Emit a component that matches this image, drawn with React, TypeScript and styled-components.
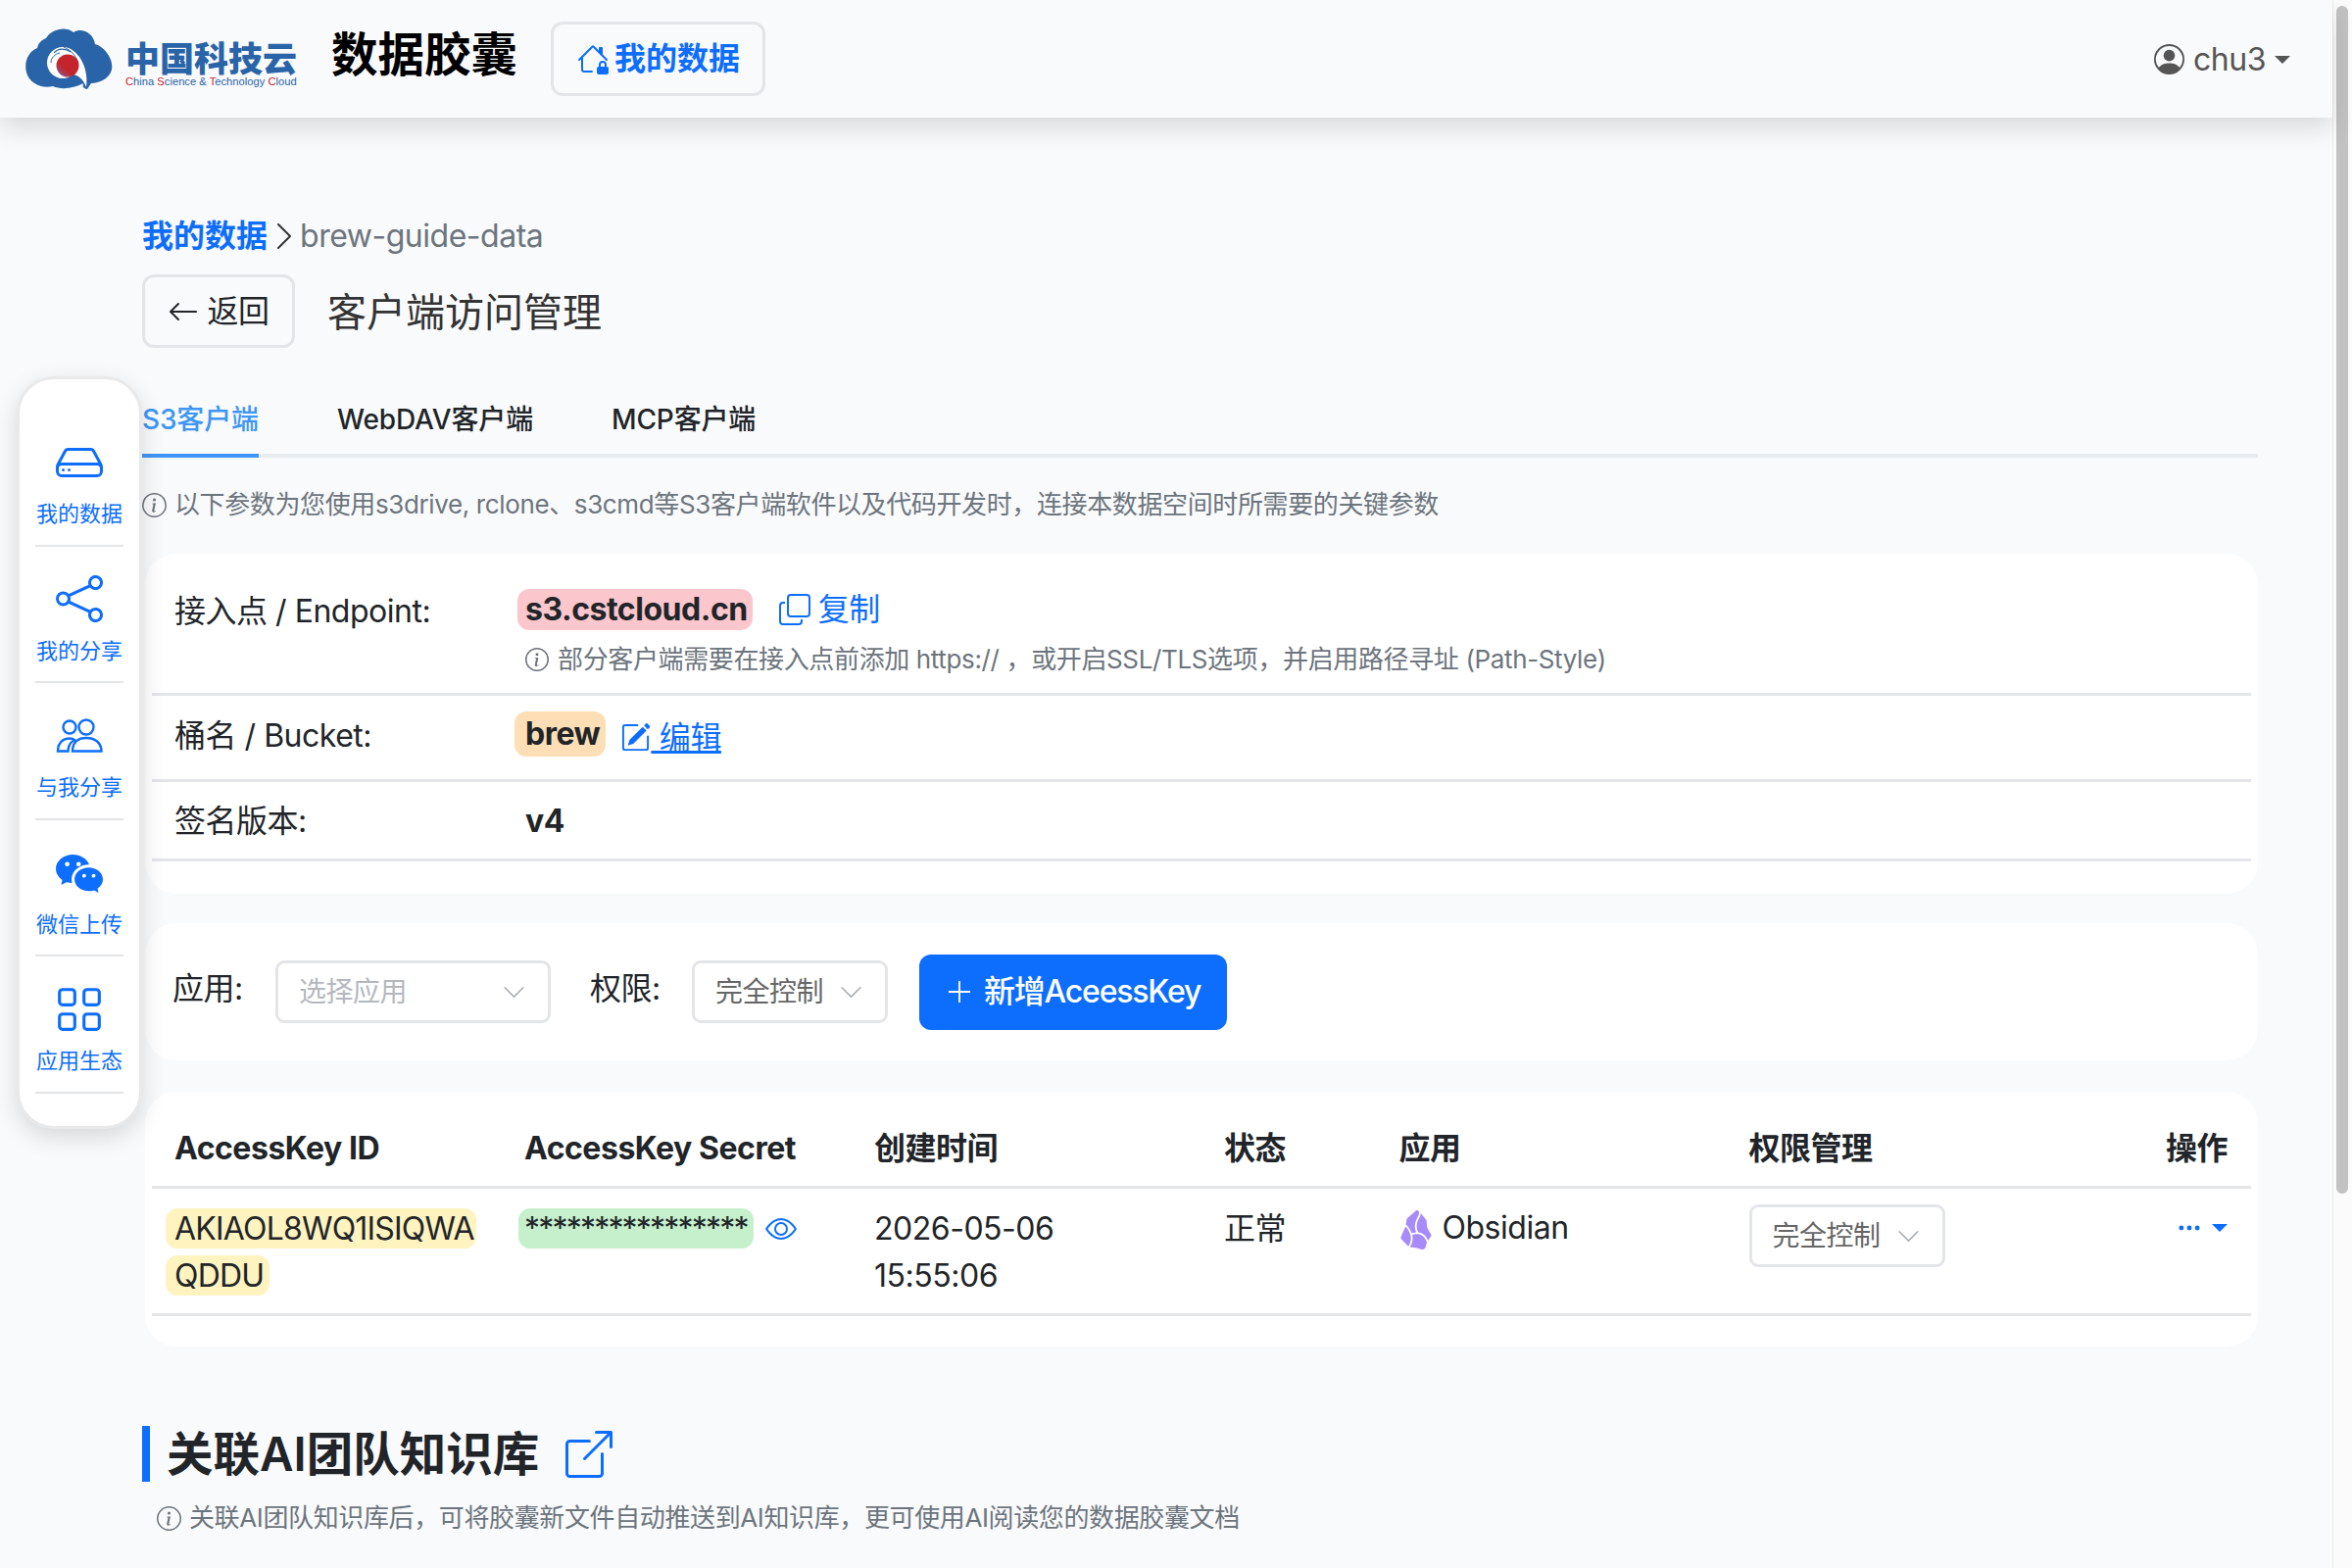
import React from "react"
import styled, { createGlobalStyle } from "styled-components"
import {
  BsArrowLeft,
  BsBoxArrowUpRight,
  BsChevronDown,
  BsChevronRight,
  BsCopy,
  BsEye,
  BsGrid,
  BsHdd,
  BsHouseLock,
  BsInfoCircle,
  BsPencilSquare,
  BsPersonCircle,
  BsPlusLg,
  BsShare,
  BsThreeDots,
  BsWechat,
} from "react-icons/bs"
import { SiObsidian } from "react-icons/si"

const BLUE = "#0d6efd"
const LINE = "#e3e5e8"
const GRAY = "#6c757d"
const INK = "#212529"

const GlobalStyle = createGlobalStyle`
  html, body {
    margin: 0;
    height: 100%;
    overflow: hidden;
    background: #f9fafc;
  }
  body {
    font-family: Inter, "Noto Sans CJK SC", sans-serif;
    font-size: 32px;
    line-height: 48px;
    letter-spacing: -0.015em;
    color: ${INK};
  }
`

// PAGE
const Page = styled.div`
  position: relative;
  display: flex;
  width: 2400px;
  height: 1600px;
  overflow: hidden;
`
const Column = styled.div`
  flex: 0 0 2380px;
  display: flex;
  flex-direction: column;
`
const ScrollTrack = styled.div`
  flex: 1;
  box-sizing: border-box;
  padding: 6px 4px 0 3px;
  background: #fbfbfb;
  border-left: 1px solid #ececec;
`
const ScrollThumb = styled.div`
  height: 1212px;
  border-radius: 6px;
  background: #c2c2c2;
`

// HEADER
const Header = styled.header`
  position: relative;
  z-index: 2;
  flex: 0 0 120px;
  display: flex;
  align-items: center;
  box-sizing: border-box;
  padding: 0 43px 0 25px;
  background: #f9fafc;
  box-shadow: 0 12px 24px rgba(0, 0, 0, 0.12);
`
const Logo = styled.div`
  display: flex;
  align-items: center;
  gap: 13px;
  width: 278px;
`
const LogoWords = styled.div`
  display: flex;
  flex-direction: column;
  width: 175px;
  padding-top: 7px;
`
const LogoName = styled.div`
  font-family: "Noto Sans CJK SC", sans-serif;
  font-size: 35px;
  line-height: 38px;
  font-weight: 900;
  letter-spacing: 0;
  color: #2a64a8;
  white-space: nowrap;
`
const LogoTag = styled.div`
  font-family: "Liberation Sans", sans-serif;
  font-size: 11.2px;
  line-height: 12px;
  letter-spacing: 0;
  color: #2a64a8;
  white-space: nowrap;
  b {
    font-weight: 400;
    color: #c8242b;
  }
`
const AppTitle = styled.div`
  margin: 0 34px 8px 35px;
  font-size: 47.5px;
  line-height: 60px;
  font-weight: 700;
  letter-spacing: 0;
  color: #000;
  white-space: nowrap;
`
const HomeButton = styled.div`
  display: flex;
  align-items: center;
  gap: 6px;
  box-sizing: border-box;
  width: 219px;
  height: 76px;
  padding-left: 24px;
  border: 3px solid ${LINE};
  border-radius: 12px;
  font-weight: 700;
  letter-spacing: 0;
  color: ${BLUE};
  white-space: nowrap;
`
const UserMenu = styled.div`
  margin-left: auto;
  display: flex;
  align-items: center;
  gap: 9px;
  padding-top: 1px;
  color: #555;
`
const Caret = styled.span<{ $color: string; $size: number }>`
  display: inline-block;
  border-left: ${(p) => p.$size}px solid transparent;
  border-right: ${(p) => p.$size}px solid transparent;
  border-top: ${(p) => p.$size}px solid ${(p) => p.$color};
`

// MAIN
const Main = styled.main`
  position: relative;
  z-index: 1;
  flex: 1;
  padding: 97px 76px 0 145px;
`
const Breadcrumb = styled.div`
  display: flex;
  align-items: center;
  height: 48px;
  color: ${GRAY};
  white-space: nowrap;
`
const CrumbLink = styled.span`
  font-weight: 700;
  letter-spacing: 0;
  color: ${BLUE};
  margin-right: 1px;
`
const TitleRow = styled.div`
  display: flex;
  align-items: center;
  gap: 33px;
  margin-top: 15px;
`
const BackButton = styled.div`
  display: flex;
  align-items: center;
  justify-content: center;
  gap: 8px;
  box-sizing: border-box;
  width: 156px;
  height: 75px;
  border: 3px solid ${LINE};
  border-radius: 12px;
  color: ${INK};
`
const PageTitle = styled.div`
  padding-top: 2px;
  font-size: 40px;
  line-height: 60px;
  letter-spacing: 0;
  color: #333;
`
const Tabs = styled.div`
  display: flex;
  gap: 80px;
  height: 73px;
  margin-top: 35px;
  border-bottom: 4px solid #e9ecef;
`
const Tab = styled.div<{ $active?: boolean }>`
  height: 73px;
  box-sizing: content-box;
  font-size: 28px;
  line-height: 76px;
  font-weight: 500;
  letter-spacing: -0.005em;
  white-space: nowrap;
  color: ${(p) => (p.$active ? "#3d96f5" : INK)};
  border-bottom: 4px solid ${(p) => (p.$active ? "#3d96f5" : "transparent")};
`
const InfoLine = styled.div<{ $indent?: number; $top: number }>`
  display: flex;
  align-items: center;
  gap: 8px;
  height: 40px;
  margin-top: ${(p) => p.$top}px;
  margin-left: ${(p) => p.$indent ?? 0}px;
  font-size: 26px;
  line-height: 40px;
  letter-spacing: -0.0145em;
  color: ${GRAY};
  white-space: nowrap;
`
const Card = styled.section<{ $top: number; $bottom?: number }>`
  box-sizing: border-box;
  margin: ${(p) => p.$top}px 0 0 3px;
  padding: 0 7px ${(p) => p.$bottom ?? 0}px;
  background: #fff;
  border-radius: 32px;
`

// ENDPOINT ROWS
const InfoRow = styled.div<{ $top: number; $bottom: number }>`
  display: grid;
  grid-template-columns: 358px 1fr;
  padding: ${(p) => p.$top}px 0 ${(p) => p.$bottom}px 23px;
  border-bottom: 3px solid ${LINE};
`
const RowLabel = styled.span`
  padding-top: 3px;
  line-height: 45px;
`
const Value = styled.div`
  display: flex;
  align-items: center;
  gap: 12px;
  height: 48px;
  white-space: nowrap;
`
const PlainValue = styled.b`
  padding-top: 3px;
`
const Pill = styled.span<{ $bg: string; $pad?: number; $padRight?: number; $height?: number; $bold?: boolean }>`
  display: inline-block;
  margin-left: -${(p) => p.$pad ?? 8}px;
  padding: 0 ${(p) => p.$padRight ?? p.$pad ?? 8}px 0 ${(p) => p.$pad ?? 8}px;
  line-height: ${(p) => p.$height ?? 42}px;
  font-weight: ${(p) => (p.$bold ? 700 : 400)};
  background: ${(p) => p.$bg};
  border-radius: 12px;
  white-space: nowrap;
`
const KeyPill = styled(Pill)`
  letter-spacing: -0.8px;
`
const SecretPill = styled(Pill)`
  letter-spacing: -1.8px;
`
const BlueLink = styled.span`
  display: inline-flex;
  align-items: center;
  gap: 8px;
  margin-left: 15px;
  color: ${BLUE};
`
const EditLink = styled.span`
  display: inline-block;
  margin: 8px 0 0 3px;
  color: ${BLUE};
  text-decoration: underline;
  white-space: pre;
  svg {
    vertical-align: -4px;
  }
`
const Hint = styled.div`
  display: flex;
  align-items: center;
  gap: 9px;
  height: 48px;
  margin-top: 3px;
  font-size: 26px;
  letter-spacing: -0.014em;
  color: ${GRAY};
  white-space: nowrap;
`

// FILTER BAR
const FilterBar = styled(Card)`
  display: flex;
  align-items: center;
  height: 140px;
  padding: 0 0 0 28px;
`
const FilterLabel = styled.span<{ $width: number; $gap?: number }>`
  width: ${(p) => p.$width}px;
  margin-bottom: 6px;
  margin-left: ${(p) => p.$gap ?? 0}px;
  white-space: nowrap;
`
const SelectBox = styled.div<{ $width: number; $muted?: boolean }>`
  display: flex;
  align-items: center;
  justify-content: space-between;
  box-sizing: border-box;
  width: ${(p) => p.$width}px;
  height: 64px;
  padding: 0 22px 0 21px;
  font-size: 28px;
  white-space: nowrap;
  color: ${(p) => (p.$muted ? "#b4b8bd" : "#666")};
  background: #fff;
  border: 3px solid ${LINE};
  border-radius: 9px;
  svg {
    color: #a8acb2;
  }
`
const AddButton = styled.div`
  display: flex;
  align-items: center;
  gap: 10px;
  box-sizing: border-box;
  width: 314px;
  height: 77px;
  margin-left: 32px;
  padding-left: 26px;
  font-weight: 500;
  letter-spacing: -1.2px;
  color: #fff;
  background: ${BLUE};
  border-radius: 12px;
  white-space: nowrap;
`

// TABLE
const TableRow = styled.div<{ $top: number; $bottom: number; $head?: boolean }>`
  display: grid;
  grid-template-columns: 2fr 2fr 2fr 1fr 2fr 2fr 1fr;
  padding: ${(p) => p.$top}px 0 ${(p) => p.$bottom}px;
  border-bottom: 3px solid ${LINE};
  font-weight: ${(p) => (p.$head ? 700 : 400)};
`
const Cell = styled.div<{ $end?: boolean }>`
  display: flex;
  flex-direction: ${(p) => (p.$end ? "row" : "column")};
  justify-content: ${(p) => (p.$end ? "flex-end" : "flex-start")};
  align-items: ${(p) => (p.$end ? "center" : "flex-start")};
  min-width: 0;
  padding: 0 24px 0 23px;
  white-space: nowrap;
`
const HeadText = styled.span`
  padding-top: 2px;
  line-height: 46px;
`
const DateText = styled.div`
  padding-top: 1px;
  line-height: 47px;
  & + & {
    padding-top: 2px;
    line-height: 46px;
  }
`
const PillStack = styled.div`
  display: flex;
  flex-direction: column;
  align-items: flex-start;
  gap: 7px;
  padding-top: 4px;
`
const SecretRow = styled.div`
  display: flex;
  align-items: center;
  gap: 12px;
  padding-top: 4px;
`
const AppName = styled.div`
  display: flex;
  align-items: center;
  gap: 7px;
  height: 48px;
  svg {
    margin: 4px 0 0 -3px;
    color: #a88bfa;
  }
`
const RowMenu = styled.div`
  display: flex;
  align-items: center;
  gap: 10px;
  height: 48px;
  color: ${BLUE};
`
const MenuCell = styled(Cell)`
  align-items: flex-start;
`

// SECTION
const SectionTitle = styled.h2`
  display: flex;
  align-items: center;
  height: 57px;
  margin: 81px 0 0;
  padding-left: 17px;
  border-left: 8px solid ${BLUE};
  font-size: 47.5px;
  line-height: 57px;
  font-weight: 600;
  letter-spacing: 0;
  color: ${INK};
  white-space: nowrap;
  svg {
    margin-left: 27px;
    color: ${BLUE};
  }
`

// SIDEBAR
const Sidebar = styled.nav`
  position: absolute;
  z-index: 3;
  left: 17px;
  top: 384px;
  box-sizing: border-box;
  width: 128px;
  height: 768px;
  padding: 31px 16px 0;
  background: #fff;
  border: 3px solid #e9e9e9;
  border-radius: 38px;
  box-shadow: 0 8px 24px rgba(0, 0, 0, 0.14);
`
const SideItem = styled.div`
  display: flex;
  flex-direction: column;
  align-items: center;
  box-sizing: border-box;
  height: 139.5px;
  padding-top: 31px;
  border-bottom: 2px solid ${LINE};
  color: ${BLUE};
`
const SideIcon = styled.div`
  display: flex;
  align-items: center;
  justify-content: center;
  height: 45px;
`
const SideLabel = styled.div`
  margin-top: 15px;
  font-size: 22px;
  line-height: 30px;
  letter-spacing: 0;
  white-space: nowrap;
`

const CloudLogo = () => (
  <svg width="90" height="64" viewBox="0 0 90 64">
    <defs>
      <linearGradient id="core" x1="0.8" y1="0.2" x2="0.15" y2="0.95">
        <stop offset="0.6" stopColor="#c4242c" />
        <stop offset="1" stopColor="#8a5a88" />
      </linearGradient>
    </defs>
    <path
      d="M22 11 C27 2 42 -2 50 5 C58 0 70 5 72 17 C82 20 91 32 89 43 C87 52 76 57 68 57 L64 63 C60 63 59 60 60 57 C50 62 38 64 29 60 C18 63 5 57 2 46 C-1 34 5 24 13 21 C14 16 17 13 22 11 Z"
      fill="#2a64a8"
    />
    <circle cx="39" cy="36" r="16" fill="#fff" />
    <path d="M40 20 C54 21 66 40 63 61 C60 53 56 49 49 48 Z" fill="#fff" />
    <path d="M40 20 C47 23 52 28 55 36" fill="none" stroke="#2a64a8" strokeWidth="1" />
    <path d="M30 26 C34 21 42 21 47 25" fill="none" stroke="#2a64a8" strokeWidth="1.2" />
    <path d="M27 36 C27 31 31 27 36 26" fill="none" stroke="#2a64a8" strokeWidth="1" />
    <circle cx="44" cy="39" r="11.5" fill="url(#core)" />
  </svg>
)

const PeopleIcon = () => (
  <svg width="48" height="36" viewBox="0 0 48 36" fill="none" stroke="currentColor" strokeWidth="2.4">
    <circle cx="31" cy="9" r="7.5" />
    <circle cx="14" cy="9" r="6.5" />
    <path d="M17 33.5 C17 24 23 20 31 20 C39 20 46.5 24 46.5 33.5 Z" />
    <path d="M2 33.5 C2 25 7 20.5 14 20.5 C16 20.5 18 21 19 22 C14.5 24.5 12.5 29 12.5 33.5 Z" />
  </svg>
)

const sideItems = [
  { label: "我的数据", icon: <BsHdd size={48} /> },
  { label: "我的分享", icon: <BsShare size={48} /> },
  { label: "与我分享", icon: <PeopleIcon /> },
  { label: "微信上传", icon: <BsWechat size={48} /> },
  { label: "应用生态", icon: <BsGrid size={50} /> },
]

const App = () => {
  return (
    <Page>
      <GlobalStyle />
      <Column>
        <Header>
          <Logo>
            <CloudLogo />
            <LogoWords>
              <LogoName>中国科技云</LogoName>
              <LogoTag>
                <b>C</b>hina <b>S</b>cience &amp; <b>T</b>echnology <b>C</b>loud
              </LogoTag>
            </LogoWords>
          </Logo>
          <AppTitle>数据胶囊</AppTitle>
          <HomeButton>
            <BsHouseLock size={32} />
            我的数据
          </HomeButton>
          <UserMenu>
            <BsPersonCircle size={31} />
            chu3
            <Caret $color="#555" $size={8} />
          </UserMenu>
        </Header>

        <Main>
          <Breadcrumb>
            <CrumbLink>我的数据</CrumbLink>
            <BsChevronRight size={32} color="#333" />
            brew-guide-data
          </Breadcrumb>
          <TitleRow>
            <BackButton>
              <BsArrowLeft size={32} />
              返回
            </BackButton>
            <PageTitle>客户端访问管理</PageTitle>
          </TitleRow>

          <Tabs>
            <Tab $active>S3客户端</Tab>
            <Tab>WebDAV客户端</Tab>
            <Tab>MCP客户端</Tab>
          </Tabs>
          <InfoLine $top={28}>
            <BsInfoCircle size={25} />
            以下参数为您使用s3drive, rclone、s3cmd等S3客户端软件以及代码开发时，连接本数据空间时所需要的关键参数
          </InfoLine>

          <Card $top={30} $bottom={33}>
            <InfoRow $top={33} $bottom={10}>
              <RowLabel>接入点 / Endpoint:</RowLabel>
              <div>
                <Value>
                  <Pill $bg="#fcc6cd" $padRight={5} $bold>
                    s3.cstcloud.cn
                  </Pill>
                  <BlueLink>
                    <BsCopy size={32} />
                    复制
                  </BlueLink>
                </Value>
                <Hint>
                  <BsInfoCircle size={24} />
                  部分客户端需要在接入点前添加 https:// ，或开启SSL/TLS选项，并启用路径寻址 (Path-Style)
                </Hint>
              </div>
            </InfoRow>
            <InfoRow $top={15} $bottom={22}>
              <RowLabel>桶名 / Bucket:</RowLabel>
              <Value>
                <Pill $bg="#fedfb5" $pad={11} $padRight={6} $height={46} $bold>
                  brew
                </Pill>
                <EditLink>
                  <BsPencilSquare size={31} /> 编辑
                </EditLink>
              </Value>
            </InfoRow>
            <InfoRow $top={14} $bottom={16}>
              <RowLabel>签名版本:</RowLabel>
              <Value>
                <PlainValue>v4</PlainValue>
              </Value>
            </InfoRow>
          </Card>

          <FilterBar $top={30}>
            <FilterLabel $width={105}>应用:</FilterLabel>
            <SelectBox $width={281} $muted>
              选择应用
              <BsChevronDown size={25} />
            </SelectBox>
            <FilterLabel $width={104} $gap={40}>
              权限:
            </FilterLabel>
            <SelectBox $width={200}>
              完全控制
              <BsChevronDown size={25} />
            </SelectBox>
            <AddButton>
              <BsPlusLg size={30} />
              新增AceessKey
            </AddButton>
          </FilterBar>

          <Card $top={32} $bottom={31}>
            <TableRow $top={33} $bottom={15} $head>
              <Cell>
                <HeadText>AccessKey ID</HeadText>
              </Cell>
              <Cell>
                <HeadText>AccessKey Secret</HeadText>
              </Cell>
              <Cell>
                <HeadText>创建时间</HeadText>
              </Cell>
              <Cell>
                <HeadText>状态</HeadText>
              </Cell>
              <Cell>
                <HeadText>应用</HeadText>
              </Cell>
              <Cell>
                <HeadText>权限管理</HeadText>
              </Cell>
              <Cell $end>
                <HeadText>操作</HeadText>
              </Cell>
            </TableRow>
            <TableRow $top={16} $bottom={15}>
              <Cell>
                <PillStack>
                  <KeyPill $bg="#fff3bf" $pad={9} $padRight={2} $height={41}>
                    AKIAOL8WQ1ISIQWA
                  </KeyPill>
                  <KeyPill $bg="#fff3bf" $pad={9} $padRight={6} $height={41}>
                    QDDU
                  </KeyPill>
                </PillStack>
              </Cell>
              <Cell>
                <SecretRow>
                  <SecretPill $bg="#c6f0cc" $pad={6} $padRight={6} $height={41}>
                    ****************
                  </SecretPill>
                  <BsEye size={32} color={BLUE} />
                </SecretRow>
              </Cell>
              <Cell>
                <DateText>2026-05-06</DateText>
                <DateText>15:55:06</DateText>
              </Cell>
              <Cell>
                <DateText>正常</DateText>
              </Cell>
              <Cell>
                <AppName>
                  <SiObsidian size={40} />
                  Obsidian
                </AppName>
              </Cell>
              <Cell>
                <SelectBox $width={200}>
                  完全控制
                  <BsChevronDown size={25} />
                </SelectBox>
              </Cell>
              <MenuCell $end>
                <RowMenu>
                  <BsThreeDots size={26} />
                  <Caret $color={BLUE} $size={8} />
                </RowMenu>
              </MenuCell>
            </TableRow>
          </Card>

          <SectionTitle>
            关联AI团队知识库
            <BsBoxArrowUpRight size={48} />
          </SectionTitle>
          <InfoLine $top={17} $indent={15}>
            <BsInfoCircle size={25} />
            关联AI团队知识库后，可将胶囊新文件自动推送到AI知识库，更可使用AI阅读您的数据胶囊文档
          </InfoLine>
        </Main>
      </Column>

      <ScrollTrack>
        <ScrollThumb />
      </ScrollTrack>

      <Sidebar>
        {sideItems.map((item) => (
          <SideItem key={item.label}>
            <SideIcon>{item.icon}</SideIcon>
            <SideLabel>{item.label}</SideLabel>
          </SideItem>
        ))}
      </Sidebar>
    </Page>
  )
}

export default App
